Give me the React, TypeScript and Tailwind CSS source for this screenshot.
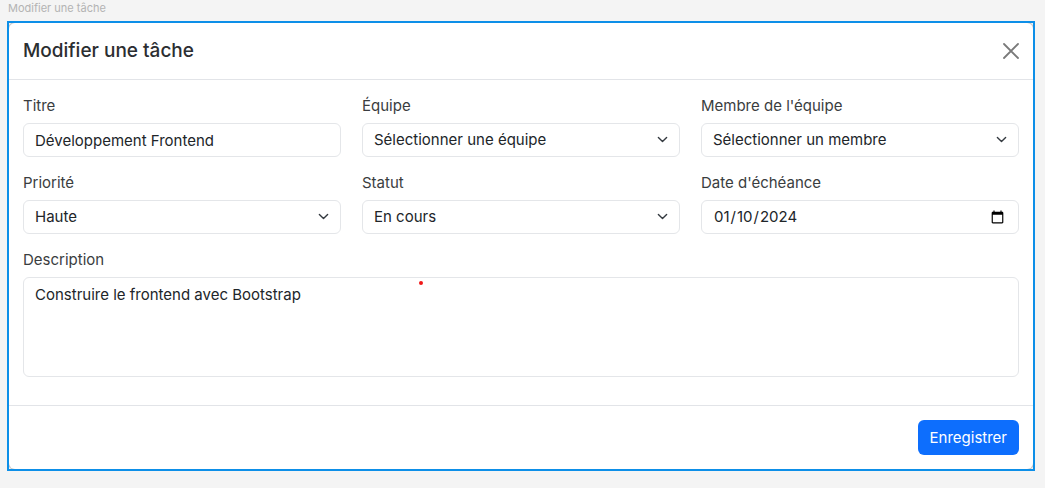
import { useId, type ReactNode } from "react";

const fieldClass =
  "block h-[34px] w-full rounded-md border border-[#e4e6e9] bg-white px-[11px] text-[15px] leading-[22px] text-[#212529] outline-none focus:border-[#86b7fe]";

function Field({ id, label, children }: { id: string; label: string; children: ReactNode }) {
  return (
    <div className="flex min-w-0 flex-col gap-[6px]">
      <label htmlFor={id} className="text-[15px] leading-[22px] text-[#3a3d40]">
        {label}
      </label>
      {children}
    </div>
  );
}

function SelectField({ label, options }: { label: string; options: string[] }) {
  const id = useId();
  return (
    <Field id={id} label={label}>
      <div className="relative">
        <select id={id} className={`${fieldClass} appearance-none pr-9`}>
          {options.map((option) => (
            <option key={option}>{option}</option>
          ))}
        </select>
        <svg
          viewBox="0 0 16 16"
          aria-hidden="true"
          className="pointer-events-none absolute right-3 top-[11px] size-[11px] fill-none stroke-[#343a40] stroke-2"
        >
          <path d="m2 5 6 6 6-6" strokeLinecap="round" strokeLinejoin="round" />
        </svg>
      </div>
    </Field>
  );
}

export default function App() {
  return (
    <div className="min-h-screen bg-[#f4f4f4] pl-[7px] pr-[10px] font-['Inter','Liberation_Sans',sans-serif]">
      <p className="pl-px pt-px text-[11px] leading-[14px] text-[#b3b3b3]">Modifier une tâche</p>
      <div className="mt-[6px] border-2 border-[#0d8fe8] bg-[#f4f4f4]">
        <form
          className="rounded-md bg-white shadow-[0_0_0_1px_#c8c8c8] [clip-path:inset(0)]"
          onSubmit={(event) => event.preventDefault()}
        >
          <header className="flex h-[57px] items-center justify-between border-b border-[#e2e4e8] px-[14px]">
            <h1 className="text-[19px] font-medium leading-7 text-[#2b2e31]">Modifier une tâche</h1>
            <button type="button" aria-label="Fermer" className="flex size-4 items-center justify-center">
              <svg viewBox="0 0 16 16" className="size-4 fill-none stroke-[#7a7a7a]" strokeWidth="1.8">
                <path d="m1 1 14 14M15 1 1 15" strokeLinecap="round" />
              </svg>
            </button>
          </header>

          <div className="grid grid-cols-3 gap-x-[21px] gap-y-[15px] px-[14px] pb-7 pt-[15px]">
            <Field id="titre" label="Titre">
              <input id="titre" type="text" defaultValue="Développement Frontend" className={fieldClass} />
            </Field>
            <SelectField label="Équipe" options={["Sélectionner une équipe"]} />
            <SelectField label="Membre de l'équipe" options={["Sélectionner un membre"]} />
            <SelectField label="Priorité" options={["Haute", "Moyenne", "Basse"]} />
            <SelectField label="Statut" options={["En cours", "Terminé"]} />
            <Field id="echeance" label="Date d'échéance">
              <input id="echeance" type="date" defaultValue="2024-01-10" className={fieldClass} />
            </Field>
            <div className="col-span-3">
              <Field id="description" label="Description">
                <div className="relative">
                  <textarea
                    id="description"
                    defaultValue="Construire le frontend avec Bootstrap"
                    className="block h-[100px] w-full resize-none rounded-md border border-[#e4e6e9] bg-white px-[11px] py-[6px] text-[15px] leading-[22px] text-[#212529] outline-none focus:border-[#86b7fe]"
                  />
                  <span className="pointer-events-none absolute left-[40%] top-1 size-1 -translate-x-1/2 rounded-full bg-[#f01818]" />
                </div>
              </Field>
            </div>
          </div>

          <footer className="flex justify-end border-t border-[#e2e4e8] p-[14px]">
            <button
              type="submit"
              className="h-[35px] rounded-md bg-[#0d6efd] px-3 text-[15px] leading-[22px] text-white"
            >
              Enregistrer
            </button>
          </footer>
        </form>
      </div>
    </div>
  );
}
